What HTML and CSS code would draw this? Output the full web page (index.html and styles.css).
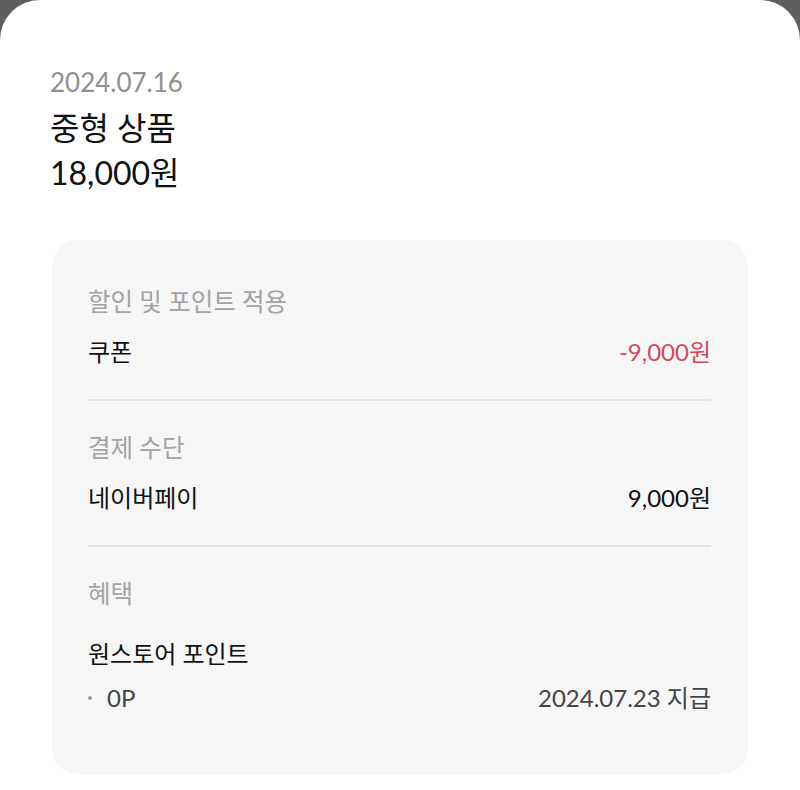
FILE: index.html
```html
<!DOCTYPE html>
<html lang="ko">

<head>
    <meta charset="UTF-8">
    <meta name="viewport" content="width=device-width, initial-scale=1.0">
    <title>결제 상세</title>
    <link rel="stylesheet" href="styles.css">
</head>

<body>
    <div class="sheet">
        <div class="order-head">
            <p class="order-date">2024.07.16</p>
            <p class="order-name">중형 상품</p>
            <p class="order-price">18,000원</p>
        </div>

        <div class="detail-card">
            <div class="detail-section">
                <p class="section-label">할인 및 포인트 적용</p>
                <div class="detail-row">
                    <span>쿠폰</span>
                    <span class="amount-minus">-9,000원</span>
                </div>
            </div>

            <div class="detail-section">
                <p class="section-label">결제 수단</p>
                <div class="detail-row">
                    <span>네이버페이</span>
                    <span>9,000원</span>
                </div>
            </div>

            <div class="detail-section benefit">
                <p class="section-label">혜택</p>
                <p class="benefit-name">원스토어 포인트</p>
                <div class="detail-row sub-row">
                    <span class="bullet">0P</span>
                    <span>2024.07.23 지급</span>
                </div>
            </div>
        </div>
    </div>
</body>

</html>
```

FILE: styles.css
```css
body {
    font-family: Lato, "Noto Sans CJK KR", sans-serif;
    background-color: #5f5f5f;
    margin: 0;
    padding: 0;
}

p {
    margin: 0;
}

.sheet {
    background: #fff;
    border-radius: 40px 40px 0 0;
    min-height: 790px;
    padding: 64px 52px 0;
    box-sizing: border-box;
}

.order-head {
    margin-bottom: 50px;
    margin-left: -2px;
}

.order-date {
    font-size: 26px;
    line-height: 36px;
    color: #8f8f8f;
}

.order-name {
    font-size: 32px;
    line-height: 56px;
    color: #111;
}

.order-price {
    font-size: 32px;
    line-height: 34px;
    color: #111;
}

.detail-card {
    background: #f6f6f6;
    border-radius: 26px;
    padding: 45px 37px 59px 36px;
}

.detail-section {
    padding-bottom: 30px;
    border-bottom: 2px solid #e4e4e4;
    margin-bottom: 30px;
}

.detail-section:last-child {
    padding-bottom: 0;
    border-bottom: none;
    margin-bottom: 0;
}

.section-label {
    font-size: 24.5px;
    line-height: 34px;
    color: #a3a3a3;
}

.detail-row {
    display: flex;
    justify-content: space-between;
    align-items: center;
    margin-top: 16px;
    font-size: 24px;
    line-height: 34px;
    color: #111;
}

.amount-minus {
    color: #d4485a;
}

.benefit-name {
    margin-top: 26px;
    font-size: 24px;
    line-height: 34px;
    color: #111;
}

.sub-row {
    margin-top: 10px;
    color: #444;
}

.bullet {
    display: flex;
    align-items: center;
    gap: 15px;
}

.bullet::before {
    content: "";
    width: 4px;
    height: 4px;
    border-radius: 50%;
    background: #999;
}
```
